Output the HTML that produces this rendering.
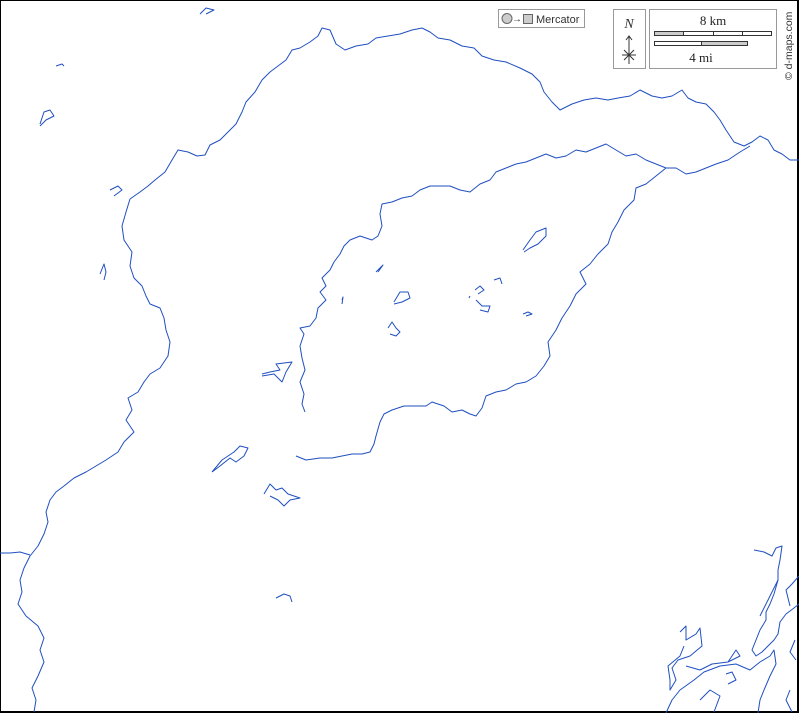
<!DOCTYPE html>
<html><head><meta charset="utf-8"><style>
html,body{margin:0;padding:0;background:#fff}
body{width:799px;height:713px;overflow:hidden;position:relative}
svg{position:absolute;left:0;top:0}
</style></head><body>
<svg width="799" height="713" viewBox="0 0 799 713" xmlns="http://www.w3.org/2000/svg">
<rect x="0.5" y="0.5" width="797" height="711" fill="#fff" stroke="#000" stroke-width="1"/>
<line x1="798" y1="0" x2="798" y2="713" stroke="#000" stroke-width="2"/>
<line x1="0" y1="712" x2="799" y2="712" stroke="#000" stroke-width="2"/>
<g fill="none" stroke="#1f4fc0" stroke-width="1" stroke-linejoin="round">
<path d="M130,199 L140,192 148,186 155,180 165,172 172,160 178,150 188,152 197,156 205,155 210,145 220,140 228,132 236,124 242,112 246,102 255,92 262,80 270,72 278,66 286,60 292,50 300,48 310,42 318,36 322,28 330,30 336,44 345,50 356,46 368,44 376,38 388,36 400,34 412,30 422,28 430,32 438,38 450,40 462,46 474,48 482,56 494,60 506,62 520,68 532,74 540,82 544,92 552,102 560,110 572,104 584,100 596,98 608,100 618,98 630,96 640,90 652,96 662,98 672,96 682,90 688,98 696,102 706,104 714,112 720,120 726,130 734,142 744,146 752,142 760,136 768,140 774,150 782,154 790,160 799,160"/>
<path d="M130,199 L126,212 122,226 124,240 132,252 130,266 134,278 142,286 146,296 150,304 160,308 164,318 166,330 170,342 168,356 160,368 150,374 144,382 138,392 128,398 132,410 126,420 134,432 124,442 118,452 106,460 96,466 86,472 74,478 64,486 56,492 50,500 46,512 48,522 44,534 38,546 30,556 24,568 20,580 22,592 18,604 26,616 38,626 44,638 40,650 44,662 38,676 32,688 36,700 34,712"/>
<path d="M0,553 L10,553 20,552 30,555"/>
<path d="M305,412 L302,404 304,394 300,382 305,370 302,358 300,346 304,334 300,328 310,326 316,318 318,308 326,300 320,292 326,286 322,278 330,270 334,262 340,254 344,246 350,240 360,236 372,240 378,236 382,226 380,214 382,204 392,202 402,198 412,196 420,190 430,186 440,186 450,186 460,190 470,192 480,184 490,180 496,172 506,168 516,164 526,162 536,158 546,154 556,158 566,156 576,150 586,152 596,148 606,144 616,150 626,156 636,154 646,160 656,164 666,168 676,168 686,174 696,172 706,168 716,164 728,160 740,152 750,146"/>
<path d="M666,168 L656,176 646,184 636,188 634,200 624,210 618,222 612,232 608,244 598,254 590,264 580,272 586,284 576,294 570,306 562,318 556,330 548,342 550,356 544,366 536,376 526,382 516,384 506,390 496,392 486,396 482,408 476,416 470,414 462,410 452,412 444,406 432,402 426,406 414,406 404,406 392,410 384,414 380,422 376,436 374,444 370,452 362,454 352,454 342,456 332,458 320,458 306,460 296,456"/>
<path d="M523,250 L530,240 536,232 546,228 546,236 538,244 530,248 524,252"/>
<path d="M376,272 L380,268 383,265 378,272"/>
<path d="M394,302 L400,292 408,292 410,298 402,302 394,304"/>
<path d="M388,328 L392,322 396,328 400,332 396,336 390,334"/>
<path d="M342,300 L343,297 342,304"/>
<path d="M469,298 L470,296"/>
<path d="M475,290 L480,286 484,290 478,294"/>
<path d="M476,300 L482,306 490,306 488,312 480,310"/>
<path d="M494,280 L500,278 502,284"/>
<path d="M523,314 L528,312 532,314 526,316"/>
<path d="M262,374 L270,372 280,370 276,364 292,362 286,372 282,382 274,374 262,376"/>
<path d="M212,472 L222,460 234,452 240,446 248,448 244,456 236,462 230,458 220,466 212,472"/>
<path d="M264,494 L270,484 276,490 282,488 288,494 294,496 300,498 290,500 284,506 278,500 270,496"/>
<path d="M276,598 L284,594 290,596 292,602"/>
<path d="M100,274 L104,264 106,272 104,280"/>
<path d="M110,190 L118,186 122,190 114,196"/>
<path d="M40,124 L44,112 50,110 54,116 46,120 40,126"/>
<path d="M56,66 L62,64 64,66"/>
<path d="M200,14 L206,8 214,10 206,14"/>
<path d="M754,550 L764,552 772,556 776,548 782,546 780,560 778,570 778,580 774,594 770,604 766,612 766,620 760,630 756,640 752,650 756,656 762,652 774,640 778,634 780,622 786,614 794,608 799,604"/>
<path d="M799,576 L792,584 786,590 790,606"/>
<path d="M778,580 L764,608 760,616"/>
<path d="M666,713 L672,700 680,690 694,680 704,672 720,666 736,664 750,670 760,662 770,656 774,650 776,664 770,676 764,690 760,700 758,713"/>
<path d="M680,632 L686,626 686,640 696,634 700,628 702,646 690,656 678,660 672,668 676,680 670,690 670,680 668,666 680,656 684,646"/>
<path d="M686,666 L700,670 712,664 728,662 740,656 736,650 728,662"/>
<path d="M726,674 L732,672 736,680 728,684"/>
<path d="M790,690 L786,700 792,712"/>
<path d="M795,640 L790,652 796,660"/>
<path d="M700,700 L710,690 720,696 714,712"/>
</g>
<rect x="498.5" y="9.5" width="86" height="18" fill="#fff" stroke="#999"/>
<circle cx="507" cy="18.5" r="5" fill="#ccc" stroke="#666"/>
<text x="512" y="22" font-family="Liberation Sans,sans-serif" font-size="10" fill="#333">→</text>
<rect x="523.5" y="14.5" width="9" height="9" fill="#ccc" stroke="#666"/>
<text x="536" y="23" font-family="Liberation Sans,sans-serif" font-size="11" fill="#333">Mercator</text>
<rect x="613.5" y="9.5" width="32" height="59" fill="#fff" stroke="#999"/>
<text x="629" y="28" text-anchor="middle" font-family="Liberation Serif,serif" font-style="italic" font-size="14" fill="#333">N</text>
<g stroke="#333" stroke-width="1" fill="none">
<path d="M629,36 L629,64 M626,40 L629,36 632,40 M622,55 L636,55 M624,50 L634,60 M634,50 L624,60"/>
</g>
<rect x="649.5" y="9.5" width="127" height="59" fill="#fff" stroke="#999"/>
<text x="713" y="25" text-anchor="middle" font-family="Liberation Serif,serif" font-size="13" fill="#222">8 km</text>
<rect x="654.5" y="31.5" width="117" height="4" fill="#fff" stroke="#333"/>
<rect x="654.5" y="31.5" width="29" height="4" fill="#ccc" stroke="#333"/>
<line x1="713.5" y1="31" x2="713.5" y2="36" stroke="#333"/>
<line x1="742.5" y1="31" x2="742.5" y2="36" stroke="#333"/>
<rect x="654.5" y="41.5" width="93" height="4" fill="#ccc" stroke="#333"/>
<rect x="654.5" y="41.5" width="47" height="4" fill="#fff" stroke="#333"/>
<text x="701" y="62" text-anchor="middle" font-family="Liberation Serif,serif" font-size="13" fill="#222">4 mi</text>
<text transform="translate(792,80) rotate(-90)" font-family="Liberation Sans,sans-serif" font-size="10.5" fill="#333">© d-maps.com</text>
</svg>
</body></html>
